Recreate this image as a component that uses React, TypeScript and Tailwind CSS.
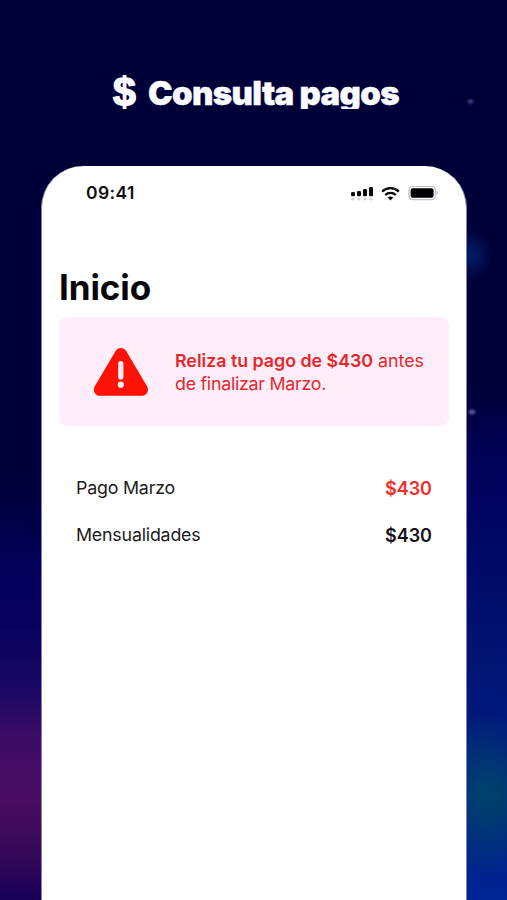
import React from "react";

const SIGNAL_BARS = [
  { x: 0, top: 6 },
  { x: 6, top: 5 },
  { x: 12, top: 3 },
  { x: 18, top: 1 },
];

function SignalIcon() {
  return (
    <svg className="h-[16px] w-[22px]" viewBox="0 0 22 16">
      {SIGNAL_BARS.map((bar) => (
        <g key={bar.x}>
          <rect x={bar.x} y={bar.top} width="4" height={10.2 - bar.top} rx="1.2" fill="#08080d" />
          <rect x={bar.x + 0.2} y="12" width="3.4" height="2.4" rx="1.1" fill="#d6d4dc" />
        </g>
      ))}
    </svg>
  );
}

function WifiIcon() {
  return (
    <svg className="h-[14px] w-[19px]" viewBox="0 0 19 14" fill="none" stroke="#08080d">
      <path d="M1.2 4.6C5.9 0 13.1 0 17.8 4.6" strokeWidth="2.3" />
      <path d="M4.2 8c3-2.900 7.600-2.900 10.600 0" strokeWidth="2.2" />
      <path d="M9.5 13.4 6.7 10.600c1.600-1.400 4-1.400 5.600 0z" fill="#08080d" stroke="none" />
    </svg>
  );
}

function BatteryIcon() {
  return (
    <svg className="h-[15px] w-[31px]" viewBox="0 0 31 15">
      <rect x="0.9" y="0.4" width="26.4" height="13.2" rx="3.8" fill="#fff" stroke="#c4c0ce" strokeWidth="1.3" />
      <rect x="2.6" y="2.2" width="23" height="9.6" rx="2" fill="#000" />
      <path d="M28.7 4.9v4.200c1.600-.7 1.600-3.500 0-4.200z" fill="#aaa5b8" />
    </svg>
  );
}

function WarningIcon() {
  return (
    <svg className="h-[50px] w-[56px] shrink-0" viewBox="0 0 56 50">
      <path
        d="M22.6 4.1C25 .1 30.8 .1 33.2 4.1L54 39.2C56.500 43.600 53.800 48.700 48.800 48.700H7C2 48.700-.7 43.600 1.800 39.200Z"
        fill="#ff1206"
      />
      <path d="M27.8 16.700v13.200" stroke="#ffeefa" strokeWidth="5.200" strokeLinecap="round" />
      <circle cx="27.8" cy="37.700" r="3.100" fill="#ffeefa" />
    </svg>
  );
}

function PaymentRow({ label, amount, due = false }: { label: string; amount: string; due?: boolean }) {
  return (
    <div className="flex h-[46px] items-center justify-between">
      <span className="text-[17.800px] tracking-[-0.190px] text-[#1b1b20]">{label}</span>
      <span className={due ? "text-[18px] font-semibold text-[#f52a25]" : "text-[18px] font-semibold text-[#121218]"}>
        {amount}
      </span>
    </div>
  );
}

function Backdrop() {
  return (
    <div className="absolute inset-0 -z-10 bg-[linear-gradient(to_bottom,#000038_0%,#000038_52%,#00005a_65%,#080060_80%)]">
      <div className="absolute top-[380px] right-0 h-[520px] w-[60px] bg-[linear-gradient(to_bottom,#00004800_0%,#00005c_18%,#00106c_45%,#001a80_70%,#002494_100%)]" />
      <div className="absolute top-[710px] right-[-50px] h-[170px] w-[140px] bg-[radial-gradient(ellipse_at_center,#00406e_8%,#00406e00_70%)]" />
      <div className="absolute top-[540px] left-0 h-[360px] w-[60px] bg-[linear-gradient(to_bottom,#00005000_0%,#08005e_22%,#1a0864_42%,#3a0c64_54%,#460c66_64%,#480c60_73%,#340858_88%,#180058_100%)]" />
      <div className="absolute top-[225px] left-[445px] h-[60px] w-[50px] bg-[radial-gradient(ellipse_at_center,#001c66_5%,#001c6600_65%)]" />
      <div className="absolute top-[98px] left-[466px] h-[7px] w-[9px] bg-[radial-gradient(ellipse_at_center,#383680_15%,#38368000_70%)]" />
      <div className="absolute top-[408px] left-[467px] h-[8px] w-[10px] bg-[radial-gradient(ellipse_at_center,#504e98_15%,#504e9800_70%)]" />
    </div>
  );
}

export default function App() {
  return (
    <div className="relative isolate flex h-[900px] w-[507px] flex-col overflow-hidden bg-[#000038] font-['Inter',sans-serif]">
      <Backdrop />
      <header className="flex h-[109px] overflow-hidden pt-[69px] pl-[113px] text-[#fafaff]">
        <span className="w-[35px] font-['Liberation_Sans',sans-serif] text-[41px] leading-[46px] font-bold [-webkit-text-stroke:1.5px_#fafaff]">
          $
        </span>
        <h1 className="text-[33px] leading-[49px] font-black tracking-[-0.650px] whitespace-nowrap [-webkit-text-stroke:0.4px_#fafaff]">
          Consulta pagos
        </h1>
      </header>

      <main className="mt-[57px] ml-[41px] flex w-[426px] flex-1 flex-col rounded-t-[42px] border-x border-[#8480b4] bg-white px-[17px]">
        <div className="flex h-[55px] items-center justify-between pr-[10px] pl-[27px]">
          <span className="text-[17.500px] font-semibold tracking-[0.400px] text-[#101014]">09:41</span>
          <div className="flex items-center gap-[8px]">
            <SignalIcon />
            <WifiIcon />
            <BatteryIcon />
          </div>
        </div>

        <h2 className="mt-[43px] text-[35px] leading-[46px] font-bold tracking-[-0.100px] text-[#070709]">Inicio</h2>

        <section className="mt-[7px] flex h-[109px] items-center rounded-[9px] bg-[#ffeefa] pl-[34px]">
          <WarningIcon />
          <p className="ml-[26px] text-[17.800px] leading-[23px] whitespace-nowrap text-[#e6262a]">
            <b className="font-semibold">Reliza tu pago de $430</b> antes
            <br />
            <span className="tracking-[-0.250px]">de finalizar Marzo.</span>
          </p>
        </section>

        <section className="mt-[39px] flex flex-col gap-[1px] px-[17px]">
          <PaymentRow label="Pago Marzo" amount="$430" due />
          <PaymentRow label="Mensualidades" amount="$430" />
        </section>
      </main>
    </div>
  );
}
